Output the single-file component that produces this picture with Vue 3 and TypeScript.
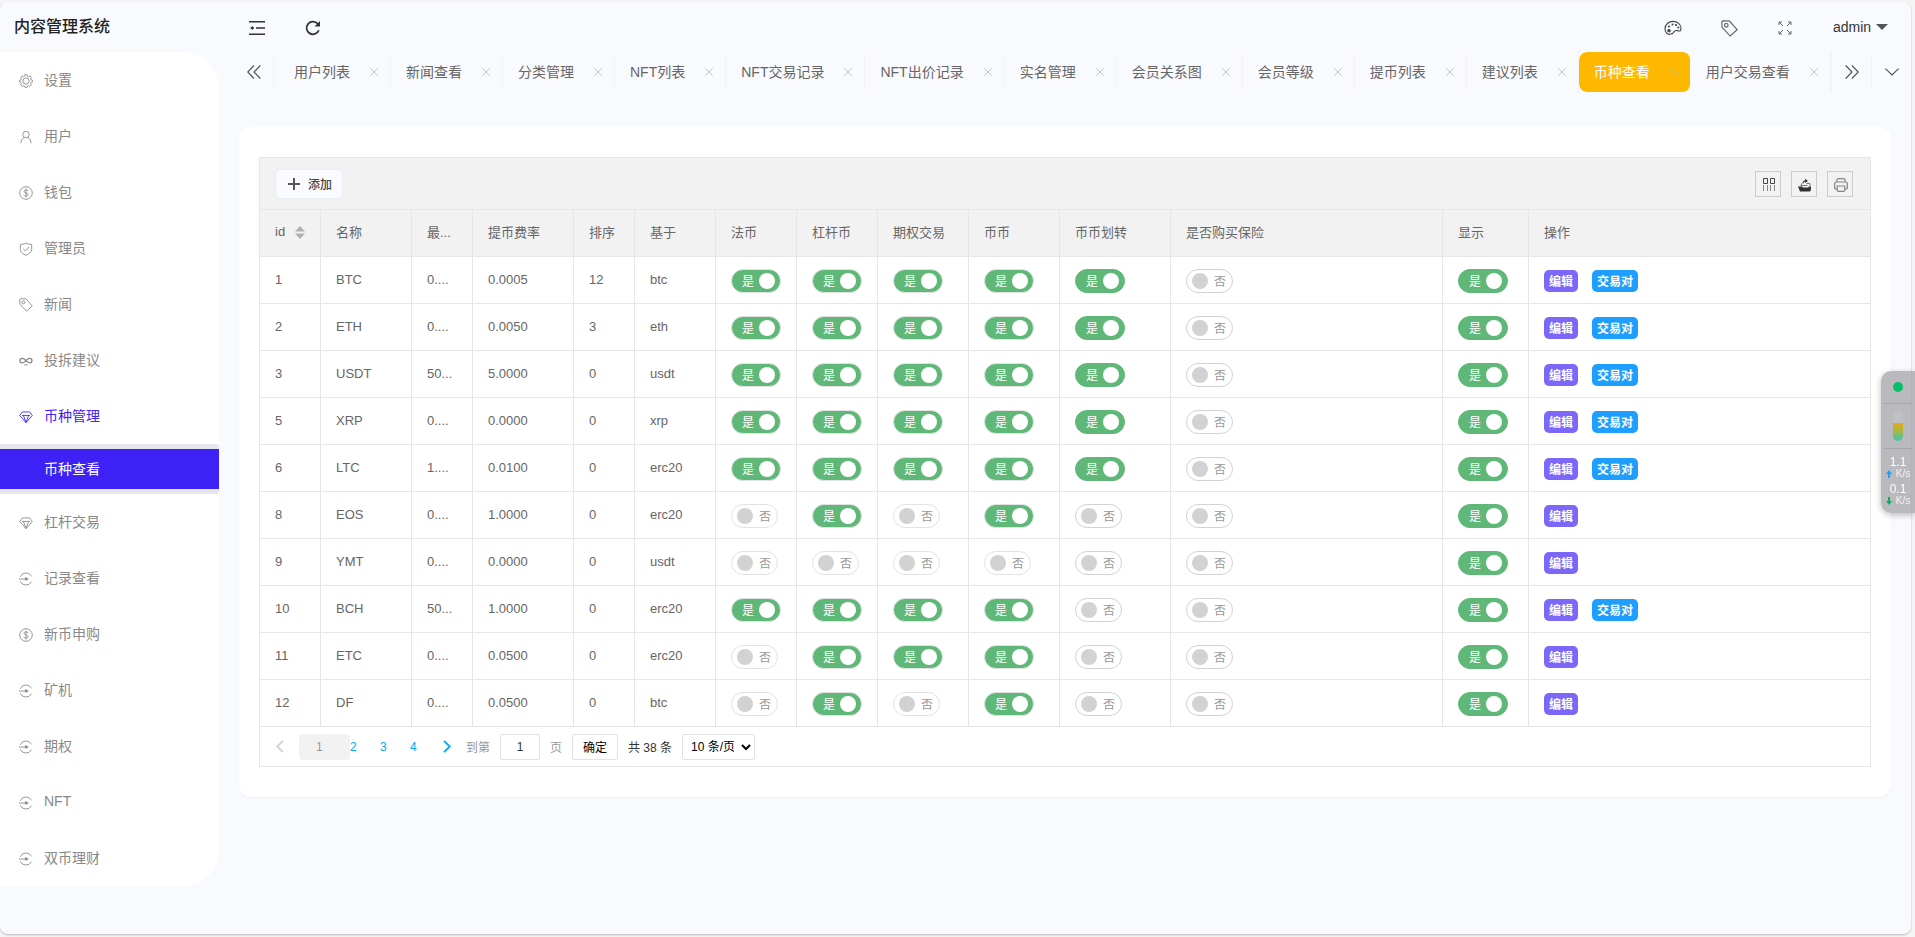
<script setup lang="ts">
import { ref } from 'vue'

interface MenuItem {
  label: string
  icon: string
  open?: boolean
  children?: string[]
}

const menu: MenuItem[] = [
  { label: '设置', icon: 'gear' },
  { label: '用户', icon: 'user' },
  { label: '钱包', icon: 'dollar' },
  { label: '管理员', icon: 'shield' },
  { label: '新闻', icon: 'tag' },
  { label: '投拆建议', icon: 'infinity' },
  { label: '币种管理', icon: 'diamond', open: true, children: ['币种查看'] },
  { label: '杠杆交易', icon: 'diamond' },
  { label: '记录查看', icon: 'login' },
  { label: '新币申购', icon: 'dollar' },
  { label: '矿机', icon: 'login' },
  { label: '期权', icon: 'login' },
  { label: 'NFT', icon: 'login' },
  { label: '双币理财', icon: 'login' },
]

const tabs = [
  '用户列表', '新闻查看', '分类管理', 'NFT列表', 'NFT交易记录', 'NFT出价记录', '实名管理',
  '会员关系图', '会员等级', '提币列表', '建议列表', '币种查看', '用户交易查看',
]
const activeTab = '币种查看'

const switchColumns = ['法币', '杠杆币', '期权交易', '币币', '币币划转', '是否购买保险', '显示']
const solidColumns = [4, 5, 6]

interface Row {
  id: number
  name: string
  min: string
  rate: string
  sort: number
  base: string
  flags: boolean[]
  pair: boolean
}

function row(id: number, name: string, min: string, rate: string, sort: number, base: string, flags: string, pair: boolean): Row {
  return { id, name, min, rate, sort, base, flags: [...flags].map((f) => f === '1'), pair }
}

const rows = ref<Row[]>([
  row(1, 'BTC', '0....', '0.0005', 12, 'btc', '1111101', true),
  row(2, 'ETH', '0....', '0.0050', 3, 'eth', '1111101', true),
  row(3, 'USDT', '50...', '5.0000', 0, 'usdt', '1111101', true),
  row(5, 'XRP', '0....', '0.0000', 0, 'xrp', '1111101', true),
  row(6, 'LTC', '1....', '0.0100', 0, 'erc20', '1111101', true),
  row(8, 'EOS', '0....', '1.0000', 0, 'erc20', '0101001', false),
  row(9, 'YMT', '0....', '0.0000', 0, 'usdt', '0000001', false),
  row(10, 'BCH', '50...', '1.0000', 0, 'erc20', '1111001', true),
  row(11, 'ETC', '0....', '0.0500', 0, 'erc20', '0111001', false),
  row(12, 'DF', '0....', '0.0500', 0, 'btc', '0101001', false),
])

const pageInput = ref('1')
</script>

<template>
  <div class="frame">
    <svg class="sprite" aria-hidden="true">
      <symbol id="gear" viewBox="0 0 16 16">
        <path d="M6.8 .8h2.400l.4 1.700 1.400.6 1.500-.9 1.700 1.700-.9 1.500.6 1.400 1.700.4v1.900l-1.700.4-.6 1.400.9 1.500-1.700 1.700-1.500-.9-1.400.6-.4 1.500H6.800l-.4-1.500-1.400-.6-1.500.9-1.700-1.700.9-1.500-.6-1.400-1.500-.4V7.200l1.500-.4.6-1.400-.9-1.500 1.700-1.700 1.500.9 1.400-.6z" />
        <circle cx="8" cy="8" r="3.600" />
      </symbol>
      <symbol id="user" viewBox="0 0 16 16">
        <circle cx="8" cy="5.200" r="3.700" />
        <path d="M2.200 15c.4-3.600 1.800-5.500 4-6.400M13.800 15c-.4-3.600-1.800-5.500-4-6.400" />
      </symbol>
      <symbol id="dollar" viewBox="0 0 16 16">
        <circle cx="8" cy="8" r="7.200" />
        <path d="M10.300 5.800C10 4.800 9.200 4.400 8 4.400c-1.300 0-2.200.6-2.200 1.700 0 2.400 4.500 1.300 4.500 3.800 0 1.100-.9 1.700-2.300 1.700-1.300 0-2.200-.5-2.400-1.600M8 3v10" />
      </symbol>
      <symbol id="shield" viewBox="0 0 16 16">
        <path d="M8 .9l1.800 1.300 4.700.6v5.700c0 3-2.700 5.300-6.500 6.700-3.800-1.400-6.500-3.700-6.500-6.700V2.800l4.700-.6zM4.800 7.800l2.500 2.400 4.300-4.500" />
      </symbol>
      <symbol id="tag" viewBox="0 0 16 16">
        <path d="M.8 1.700L1 6.900l7.600 8.200 6.600-6L8 1 2 .7z" />
        <circle cx="5" cy="5" r="1.700" />
      </symbol>
      <symbol id="infinity" viewBox="0 0 16 16">
        <path d="M1 7.500c0-3.400 4.100-3.400 7 0s6.800 3.400 6.800 0-4-3.400-6.800 0-7 3.400-7 0z" stroke-width="1.500" />
        <path d="M6 12.500h4" />
      </symbol>
      <symbol id="diamond" viewBox="0 0 16 16">
        <path d="M4 2.200h8l3.200 4L8 14.500.8 6.200zM3.500 6.200h9M5 6.200l3 8 3-8" />
      </symbol>
      <symbol id="login" viewBox="0 0 16 16">
        <path d="M14.300 5A7 7 0 0 0 1.500 5.500M1.500 10.500A7 7 0 0 0 14.300 11M0 8h8" />
        <path d="M7.500 6.500v3l3-1.500z" fill="currentColor" />
      </symbol>
    </svg>

    <aside class="side">
      <h1 class="logo">内容管理系统</h1>
      <nav class="menu">
        <template v-for="item in menu" :key="item.label">
          <a href="#" class="menu-item" :class="{ open: item.open }">
            <svg class="menu-icon"><use :href="'#' + item.icon" /></svg>
            <span>{{ item.label }}</span>
          </a>
          <div v-if="item.children" class="submenu">
            <a v-for="child in item.children" :key="child" href="#" class="submenu-item">{{ child }}</a>
          </div>
        </template>
      </nav>
    </aside>

    <div class="main">
      <header class="header">
        <button class="head-btn" aria-label="收起菜单">
          <svg width="16" height="14" viewBox="0 0 16 14" fill="none" stroke="#333" stroke-width="1.500">
            <path d="M0 .8h16M7 7h9M0 13.200h16M3 7h2" />
            <path d="M1 7l3-2v4z" fill="#333" stroke="none" />
          </svg>
        </button>
        <button class="head-btn" aria-label="刷新">
          <svg width="16" height="16" viewBox="0 0 16 16" fill="none" stroke="#333" stroke-width="1.800">
            <path d="M13.800 10.200A6.300 6.300 0 1 1 12.800 4" />
            <path d="M15 1v5.500H9.500z" fill="#333" stroke="none" />
          </svg>
        </button>
        <span class="spacer"></span>
        <button class="head-btn" aria-label="主题">
          <svg width="18" height="16" viewBox="0 0 18 16" fill="none" stroke="#444" stroke-width="1.100">
            <path d="M6 14.300C3 14.600 1 12.200 1 9c0-4.500 3.600-7.600 8-7.600s8 3 8 6.900c0 2.400-.8 3-2.300 2.600-2-.6-3.600-.8-4.400.6-.6 1.200-.9 2.600-4.300 2.800z" />
            <g fill="#444"><circle cx="5" cy="6.500" r=".5" /><circle cx="8.500" cy="4.500" r=".5" /><circle cx="12" cy="5" r=".5" /><circle cx="14.300" cy="7.500" r=".5" /><circle cx="5" cy="10.800" r="1.200" /></g>
          </svg>
        </button>
        <button class="head-btn" aria-label="便签">
          <svg class="line" width="17" height="17"><use href="#tag" /></svg>
        </button>
        <button class="head-btn" aria-label="全屏">
          <svg width="14" height="14" viewBox="0 0 14 14" fill="none" stroke="#666">
            <path d="M1 4V1h3M10 1h3v3M13 10v3h-3M4 13H1v-3M1 1l4 4M13 1L9 5M13 13L9 9M1 13l4-4" />
          </svg>
        </button>
        <button class="account">admin<i class="caret"></i></button>
      </header>

      <div class="tabbar">
        <button class="tab-ctl first" aria-label="向左">
          <svg width="14" height="14" viewBox="0 0 14 14"><path d="M7 .5L.8 7 7 13.500M13.300.5L7 7l6.300 6.500" /></svg>
        </button>
        <ul class="tabs">
          <li v-for="tab in tabs" :key="tab" class="tab" :class="{ active: tab === activeTab }">
            <a href="#">{{ tab }}</a>
            <button class="close" :aria-label="'关闭' + tab">
              <svg width="8" height="8" viewBox="0 0 8 8"><path d="M.3.300l7.400 7.400M7.700.3L.3 7.700" /></svg>
            </button>
          </li>
        </ul>
        <button class="tab-ctl" aria-label="向右">
          <svg width="14" height="14" viewBox="0 0 14 14"><path d="M.7.500L7 7 .7 13.500M7 .5L13.200 7 7 13.500" /></svg>
        </button>
        <button class="tab-ctl" aria-label="更多">
          <svg width="14" height="8" viewBox="0 0 14 8"><path d="M.4.600L7 7 13.600.600" /></svg>
        </button>
      </div>

      <section class="card">
        <div class="grid">
          <div class="toolbar">
            <button class="add">
              <svg width="12" height="12" viewBox="0 0 12 12"><path d="M6 0v12M0 6h12" stroke="#555" stroke-width="2" /></svg>
              <span>添加</span>
            </button>
            <div class="tools">
              <button class="tool" aria-label="筛选列">
                <svg width="14" height="14" viewBox="0 0 14 14" fill="none" stroke="#444">
                  <path d="M1.500.500h4v5h-4zM8.500.500h4v5h-4z" /><path d="M1.500 7v6M5.500 7v6M8.500 7v6M12.500 7v6" stroke="#888" />
                </svg>
              </button>
              <button class="tool" aria-label="导出">
                <svg width="14" height="14" viewBox="0 0 14 14" fill="#333">
                  <path d="M0 8.500h4l1 1h5l1-1H13V12l-1 1.500H2z" /><path d="M4.500 5.500c0-2 1-3 2.500-3V.800L10 3 7 5V3.800C6 3.800 5.500 4.300 5.500 5.500z" /><path d="M8.500 5.500H12v4M2.500 7.500h7M3.500 5.500v2" fill="none" stroke="#777" />
                </svg>
              </button>
              <button class="tool" aria-label="打印">
                <svg width="14" height="14" viewBox="0 0 14 14" fill="none" stroke="#888" stroke-width="1.200">
                  <path d="M3 4V1.500L4 .600h6l1 .9V4M3 11H1.500L.6 10V5.500L1.800 4h10.400l1.200 1.500V10l-.9 1H11" /><path d="M3.200 8h7.600v4.500l-.8.9H4l-.8-.9z" />
                </svg>
              </button>
            </div>
          </div>

          <table class="table">
            <colgroup>
              <col class="w61" /><col class="w91" /><col class="w61" /><col class="w101" /><col class="w61" /><col class="w81" />
              <col class="w81" /><col class="w81" /><col class="w91" /><col class="w91" /><col class="w111" /><col class="w272" /><col class="w86" /><col />
            </colgroup>
            <thead>
              <tr>
                <th><span class="sortable">id<svg width="10" height="13" viewBox="0 0 10 13"><path d="M5 0l5 5.500H0zM5 13l5-5.500H0z" fill="#b2b2b2" /></svg></span></th>
                <th>名称</th>
                <th>最...</th>
                <th>提币费率</th>
                <th>排序</th>
                <th>基于</th>
                <th v-for="c in switchColumns" :key="c">{{ c }}</th>
                <th>操作</th>
              </tr>
            </thead>
            <tbody>
              <tr v-for="r in rows" :key="r.id">
                <td>{{ r.id }}</td>
                <td>{{ r.name }}</td>
                <td>{{ r.min }}</td>
                <td>{{ r.rate }}</td>
                <td>{{ r.sort }}</td>
                <td>{{ r.base }}</td>
                <td v-for="(c, i) in switchColumns" :key="c">
                  <label class="switch" :class="{ on: r.flags[i], solid: solidColumns.includes(i) }">
                    <input v-model="r.flags[i]" type="checkbox" :aria-label="r.name + c" />
                    <span>{{ r.flags[i] ? '是' : '否' }}</span><i></i>
                  </label>
                </td>
                <td>
                  <div class="actions">
                    <button class="act edit">编辑</button>
                    <button v-if="r.pair" class="act pair">交易对</button>
                  </div>
                </td>
              </tr>
            </tbody>
          </table>

          <div class="pager">
            <button class="arrow prev" aria-label="上一页" disabled><svg width="8" height="13" viewBox="0 0 8 13"><path d="M7 .8L1.200 6.500 7 12.200" /></svg></button>
            <span class="current">1</span>
            <a href="#">2</a><a href="#">3</a><a href="#">4</a>
            <button class="arrow next" aria-label="下一页"><svg width="8" height="13" viewBox="0 0 8 13"><path d="M1 .8l5.800 5.700L1 12.200" /></svg></button>
            <label class="jump">到第<input v-model="pageInput" type="text" />页</label>
            <button class="go">确定</button>
            <span class="total">共 38 条</span>
            <select aria-label="每页条数"><option>10 条/页</option><option>20 条/页</option></select>
          </div>
        </div>
      </section>
    </div>

    <div class="monitor">
      <i class="dot"></i>
      <div class="gauge"><i class="battery"></i></div>
      <div class="speed"><b>1.1</b><span><svg class="up" width="6" height="8" viewBox="0 0 6 8"><path d="M3 0l3 4H4v4H2V4H0z" /></svg>K/s</span></div>
      <div class="speed"><b>0.1</b><span><svg class="down" width="6" height="8" viewBox="0 0 6 8"><path d="M3 8l3-4H4V0H2v4H0z" /></svg>K/s</span></div>
    </div>
  </div>
</template>

<style>
html, body { height: 100%; }
body { margin: 0; background: #f5f5f5; }
#app { height: 100%; box-sizing: border-box; padding: 2px 4px 3px 0; }
</style>

<style scoped>
* { box-sizing: border-box; }
.frame {
  min-height: 100%;
  display: flex;
  background: #f9fafe;
  border-radius: 8px;
  box-shadow: 0 1px 2px rgba(0, 0, 0, 0.25);
  font-family: "Liberation Sans", "Noto Sans CJK SC", sans-serif;
  font-size: 14px;
  color: #666;
}
button { font-family: inherit; font-size: inherit; color: inherit; border: 0; padding: 0; margin: 0; background: none; cursor: pointer; }
a { color: inherit; text-decoration: none; }
.sprite { display: none; }

.side { width: 219px; flex: none; }
.logo { margin: 0; padding-left: 14px; height: 50px; line-height: 50px; font-size: 16px; font-weight: 500; color: #222; }
.menu { background: #fff; border-radius: 0 36px 36px 0; }
.menu-item { display: flex; align-items: center; gap: 11px; height: 56px; padding-left: 19px; color: #888; }
.menu-item span { padding-bottom: 2px; }
.menu-item.open { color: #3d21f5; }
.menu-icon { width: 14px; height: 14px; margin-top: 2px; fill: none; stroke: currentColor; stroke-width: 1px; }
.submenu { padding: 5px 0; background: #e4e7ed; border-radius: 0 3px 3px 0; }
.submenu-item { display: block; height: 40px; line-height: 40px; padding-left: 44px; background: #3d21f5; color: #fff; }

.main { flex: 1; min-width: 0; }
.header { display: flex; align-items: center; height: 50px; padding-left: 10px; }
.head-btn { width: 56px; height: 50px; display: flex; align-items: center; justify-content: center; padding-top: 2px; }
.line { fill: none; stroke: #555; }
.spacer { flex: 1; }
.account { width: 98px; padding-left: 20px; display: flex; align-items: center; gap: 5px; color: #333; }
.caret { border: 6px solid transparent; border-top-color: #555; border-bottom-width: 0; }

.tabbar { display: flex; height: 40px; padding-left: 15px; }
.tab-ctl { width: 40px; flex: none; display: flex; align-items: center; justify-content: center; border-left: 1px solid #f4f4f6; }
.tab-ctl.first { border-left: 0; border-right: 1px solid #f4f4f6; }
.tab-ctl svg { fill: none; stroke: #555; stroke-width: 1.200px; }
.tabs { flex: 1; min-width: 0; display: flex; margin: 0; padding: 0 0 0 5px; list-style: none; overflow: hidden; }
.tab { flex: none; display: flex; align-items: center; gap: 16px; padding: 0 8px 0 15px; border-right: 1px solid #f4f4f6; white-space: nowrap; }
.tab a { padding-bottom: 2px; }
.close { width: 16px; height: 16px; display: flex; align-items: center; justify-content: center; }
.close svg { fill: none; stroke: #c6c6c8; }
.tab.active { background: #ffb800; background-clip: padding-box; color: #fff; border-radius: 8px; border-right-color: transparent; }
.tab.active .close svg { stroke: #d2b45c; }

.card { margin: 35px 20px 0; padding: 30px 20px; background: #fff; border-radius: 12px; box-shadow: 0 1px 2px rgba(0, 0, 0, 0.05); }
.grid { border: 1px solid #e6e6e6; }
.toolbar { display: flex; align-items: center; justify-content: space-between; height: 52px; padding: 1px 17px 0 15px; background: #f2f2f2; border-bottom: 1px solid #e6e6e6; }
.add { display: flex; align-items: center; gap: 8px; height: 30px; padding: 0 10px 0 12px; font-size: 12px; font-weight: 500; color: #444; background: #f9fbff; border: 1px solid #e4eef4; border-radius: 5px; }
.add span { padding-bottom: 2px; }
.tools { display: flex; gap: 10px; }
.tool { width: 26px; height: 26px; display: flex; align-items: center; justify-content: center; padding: 2px 0 0 2px; border: 1px solid #ccc; }

.table { width: 100%; table-layout: fixed; border-collapse: separate; border-spacing: 0; font-size: 13px; }
.w61 { width: 61px; } .w81 { width: 81px; } .w86 { width: 86px; } .w91 { width: 91px; }
.w101 { width: 101px; } .w111 { width: 111px; } .w272 { width: 272px; }
th, td { height: 47px; padding: 0 15px 2px; text-align: left; font-weight: 400; white-space: nowrap; border-right: 1px solid #e6e6e6; border-bottom: 1px solid #e6e6e6; }
th { padding-bottom: 4px; background: #f2f2f2; }
th:last-child, td:last-child { border-right: 0; }
.sortable { display: flex; align-items: center; gap: 10px; }
.sortable svg { flex: none; margin-top: 2px; }

.switch { position: relative; display: flex; align-items: center; width: 47px; height: 24px; margin-top: 4px; padding: 0 6px 0 5px; border: 1px solid #e2e2e2; border-radius: 12px; background: #fff; font-size: 12px; color: #999; flex-direction: row-reverse; justify-content: space-between; cursor: pointer; }
.switch span { padding-bottom: 2px; }
.switch input { position: absolute; inset: 0; margin: 0; opacity: 0; }
.switch i { width: 16px; height: 16px; border-radius: 50%; background: #d2d2d2; }
.switch.solid { border-color: #d2d2d2; }
.switch.on { width: 50px; flex-direction: row; padding: 0 5px 0 10px; background: #5fb878; color: #fff; }
.switch.on.solid { border-color: #5fb878; }
.switch.on i { background: #fff; }

.actions { display: flex; gap: 14px; margin-top: 4px; }
.act { height: 22px; padding: 0 5px 2px; border-radius: 5px; font-size: 12px; font-weight: 700; color: #fff; }
.edit { background: #7b68f8; }
.pair { background: #1e9fff; }

.pager { display: flex; align-items: center; height: 39px; padding-left: 16px; font-size: 12px; color: #333; }
.pager a { width: 30px; color: #01aaed; }
.arrow { display: flex; align-items: center; height: 26px; }
.arrow svg { fill: none; stroke: #01aaed; stroke-width: 1.800px; }
.prev svg { stroke: #d2d2d2; }
.prev { margin-right: 15px; }
.next { margin: 0 15px 0 3px; }
.current { width: 51px; height: 26px; line-height: 26px; padding-left: 17px; background: #f2f2f2; border-radius: 4px; color: #999; }
.jump { display: flex; align-items: center; gap: 10px; color: #999; }
.jump input { width: 40px; height: 26px; padding: 0; text-align: center; font: inherit; color: #333; border: 1px solid #e2e2e2; border-radius: 2px; }
.go { width: 46px; height: 26px; margin: 0 10px; border: 1px solid #e2e2e2; border-radius: 2px; color: #000; }
.pager select { width: 73px; height: 26px; margin-left: 10px; padding: 0 4px; font: inherit; color: #000; background: #fff; border: 1px solid #e2e2e2; border-radius: 2px; }

.monitor { position: fixed; right: 0; top: 371px; width: 34px; height: 142px; display: flex; flex-direction: column; align-items: center; background: rgba(166, 166, 172, 0.78); border-radius: 10px 0 0 10px; box-shadow: 0 2px 6px rgba(0, 0, 0, 0.25); font-size: 10px; color: #f2f2f2; }
.dot { width: 10px; height: 10px; margin: 11px 0; border-radius: 50%; background: #06bf67; }
.gauge { width: 28px; height: 46px; margin-bottom: 6px; display: flex; align-items: center; justify-content: center; border: 1px solid #a4a8ae; border-width: 1px 0; }
.battery { width: 10px; height: 30px; border-radius: 5px; background: linear-gradient(#c0c0c4 12px, #e8a81a 12px, #a8b840 20px, #38c8b8 30px); }
.speed { display: flex; flex-direction: column; align-items: center; height: 27px; }
.speed b { font-weight: 400; font-size: 12px; line-height: 14px; color: #fff; }
.speed span { display: flex; align-items: center; gap: 4px; line-height: 10px; }
.up { fill: #18a0ff; }
.down { fill: #06b060; }
</style>
